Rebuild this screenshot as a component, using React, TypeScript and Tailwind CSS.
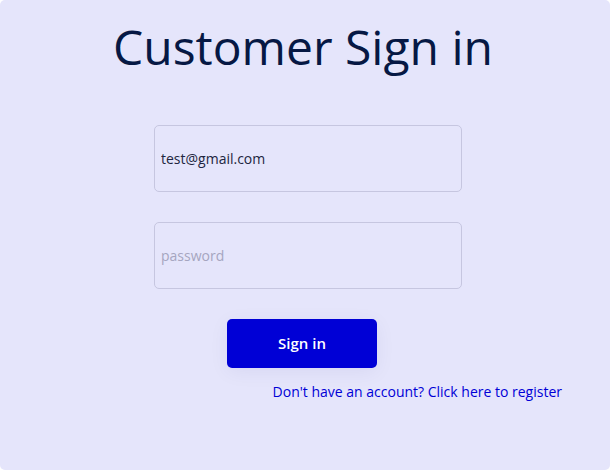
import React from "react";

export default function App() {
  return (
    <div className="min-h-screen bg-white pr-[3px] pb-px font-['Open_Sans',sans-serif]">
      <main className="flex min-h-[470px] flex-col rounded-[5px] bg-[#e5e5fb] pt-[15px]">
        <h1 className="pr-1 text-center text-5xl leading-16 text-[#061844]">Customer Sign in</h1>
        <form className="mt-[46px] flex flex-col px-12" onSubmit={(e) => e.preventDefault()}>
          <div className="flex justify-center pl-1.5">
            <div className="flex w-[308px] flex-col gap-[30px]">
              <input
                type="email"
                aria-label="Email"
                defaultValue="test@gmail.com"
                className="h-[67px] rounded-[5px] border border-[#c6c6e0] bg-transparent px-1.5 text-sm text-[#212540]"
              />
              <input
                type="password"
                aria-label="Password"
                placeholder="password"
                className="h-[67px] rounded-[5px] border border-[#c6c6e0] bg-transparent px-1.5 text-sm text-[#212540] placeholder:text-[#a5a5c0]"
              />
            </div>
          </div>
          <div className="mt-[30px] flex justify-center pr-1.5">
            <button
              type="submit"
              className="h-[49px] w-[150px] rounded-[5px] bg-[#0000d6] text-[15px] font-semibold text-white shadow-[0_4px_20px_rgba(0,0,100,0.06)]"
            >
              Sign in
            </button>
          </div>
          <a href="#register" className="mt-3.5 self-end text-sm text-[#0000d6]">
            Don't have an account? Click here to register
          </a>
        </form>
      </main>
    </div>
  );
}
